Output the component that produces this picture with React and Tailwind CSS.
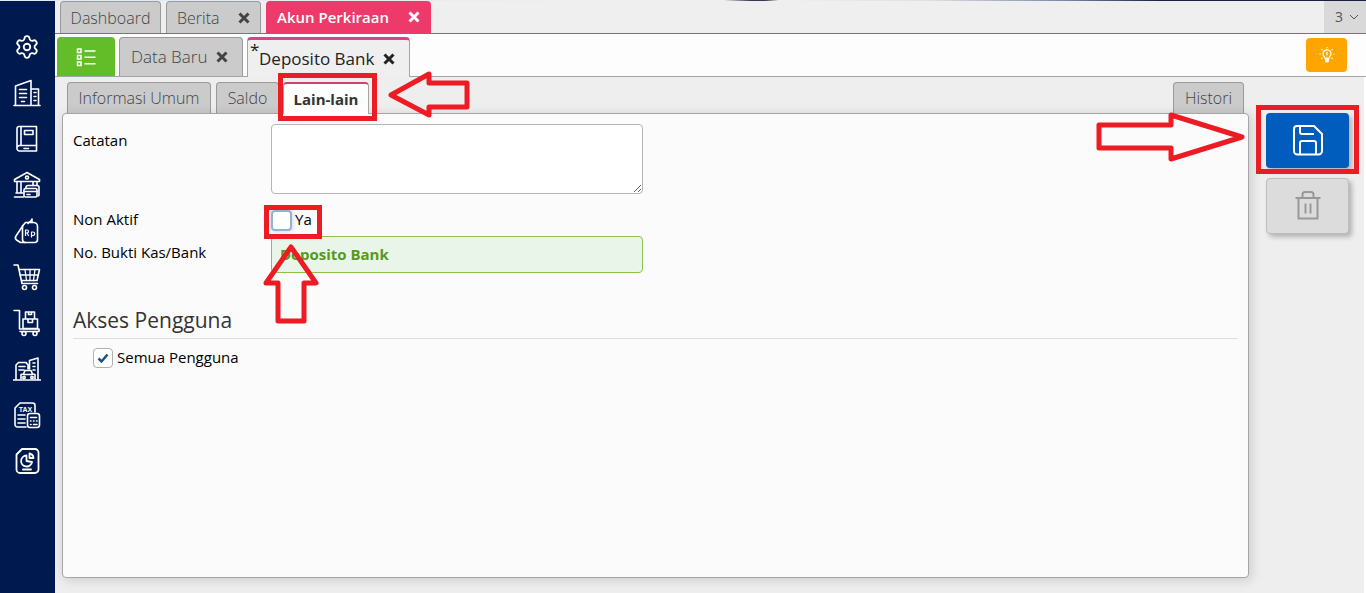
// src/App.jsx
import React, { useState } from "react";
import { Settings } from "lucide-react";

/* ---------- icons ---------- */

function Glyph({ children, size = 28, stroke = 1.6 }) {
  return (
    <svg
      width={size}
      height={size}
      viewBox="0 0 28 28"
      fill="none"
      stroke="currentColor"
      strokeWidth={stroke}
      strokeLinecap="round"
      strokeLinejoin="round"
      aria-hidden="true"
    >
      {children}
    </svg>
  );
}

const CompanyIcon = () => (
  <Glyph>
    <path d="M1 26.5h26M2.500 26.500V7L18 1.500v25M18 10h7.500v16.500" />
    <path d="M6.500 10.500h7M6.500 14.500h7M6.500 18.500h7M8.500 22.500h3M21 13.500h2M21 17.500h2M21 21.500h2" />
  </Glyph>
);

const LedgerIcon = () => (
  <Glyph>
    <path d="M6 1.500h17.500v24.500H6.500a2.500 2.500 0 0 1-2.500-2.500V3.500a2 2 0 0 1 2-2Z" />
    <path d="M8 1.500v19M4.500 21.500c.5-.7 1-1 2-1h17M11.500 5.500h8.500v4h-8.500zM11 23.500h4.500" />
  </Glyph>
);

const BankIcon = () => (
  <Glyph>
    <path d="M1.500 8.500 14 1.500l12.500 7v2h-25zM4 10.500v11M8 10.500v11M20 10.500v4M24 10.500v4M3 22h7M1.500 26h9" />
    <circle cx="14" cy="6.500" r="1.500" />
    <path d="M13 17.500v-1a2 2 0 0 1 2-2h9a2 2 0 0 1 2 2V24a1 1 0 0 1-1 1" />
    <rect x="11" y="17.500" width="13" height="8.500" rx="1.500" />
    <path d="M11 20.500h13M14 23.500h3" />
  </Glyph>
);

const SalesTagIcon = () => (
  <Glyph>
    <path d="M12.500 5.500h8a4 4 0 0 1 4 4v13a3 3 0 0 1-3 3h-9a3 3 0 0 1-3-3V9z" />
    <path d="m10 8.500-7 10.500a3 3 0 0 0 .5 4l4 2.500h5M15 6.500c1-2.500 2.500-.5 4-4.500v3.500" />
    <path d="M12.500 18.500v-5.500h1.500a1.300 1.300 0 0 1 0 3h-1.500m1.500 0 1.500 2.500M18.500 20v-5h1.500a1.500 1.500 0 0 1 0 3.500h-1.500" strokeWidth="1.200" />
  </Glyph>
);

const CartIcon = () => (
  <Glyph>
    <path d="M1 2h4l4 18.500M6 6.500h20.500L24 17.500H8.500M9 20.500h15.500" />
    <path d="M7 12h18.500M12 6.500l1.500 11M17 6.500v11M22 6.500l-1.500 11" strokeWidth="1.300" />
    <circle cx="11.500" cy="24.500" r="2" />
    <circle cx="21.500" cy="24.500" r="2" />
  </Glyph>
);

const TrolleyIcon = () => (
  <Glyph>
    <path d="M1 1.500h5.500V20H26v2.500H7" />
    <path d="M10 10h14.500v9.500H10zM12.500 3h9v7h-9zM15.500 3v2.500h3V3M15 10v3.500h4.500V10" />
    <circle cx="11" cy="24.500" r="2" />
    <circle cx="22" cy="24.500" r="2" />
  </Glyph>
);

const AssetIcon = () => (
  <Glyph>
    <path d="M.5 25h27M3 25V10l2.500-2.500H13l2 2.500v4M16.500 14V5.500L25 3v22" />
    <path d="M6 11.500h6M6 15h5M20 8h2M20 11.500h2M20 15h2" />
    <path d="M8 24v-4.500l2.500-.5 1.500-3.500h6l1.500 3.500 2.500.5V24M11 19.500h8" />
    <circle cx="11" cy="22.500" r="1.200" />
    <circle cx="19" cy="22.500" r="1.200" />
  </Glyph>
);

const TaxIcon = () => (
  <Glyph>
    <path d="M13 26H4.500a2.500 2.500 0 0 1-2.500-2.500V7l5-5h12.500A2.500 2.500 0 0 1 22 4.500V11" />
    <path d="M5 14h7M5 18h7M5 22h7" />
    <rect x="14.500" y="12.500" width="12" height="14" rx="2.500" />
    <path d="M17.500 16.500h6M17.500 20h.5M20.500 20h.5M23.500 20h.5M17.500 23.500h.5M20.500 23.500h3.500" />
    <text
      x="12.500"
      y="10.500"
      textAnchor="middle"
      fontSize="7"
      fontWeight="700"
      fontFamily="Liberation Sans, sans-serif"
      fill="currentColor"
      stroke="none"
    >
      TAX
    </text>
  </Glyph>
);

const ReportIcon = () => (
  <Glyph stroke={1.8}>
    <path d="M9 2h13a3.500 3.500 0 0 1 3.500 3.500v17A3.500 3.500 0 0 1 22 26H7a3.500 3.500 0 0 1-3.500-3.500v-15z" />
    <path d="M13.500 8.500a5.500 5.500 0 1 0 5.500 6.500l-5.500-1zM16.500 11V6.500a5 5 0 0 1 4 4.500zM10 22.500h8" />
  </Glyph>
);

const ListIcon = () => (
  <svg width="20" height="20" viewBox="0 0 20 20" fill="none" stroke="currentColor" strokeWidth="1.500" aria-hidden="true">
    <path d="M1.500 2h3.500v3.500H1.500zM1.500 8.500h3.500V12H1.500zM1.500 15h3.500v3.500H1.500zM8.500 4h11M8.500 10.300h11M8.500 16.700h11" />
  </svg>
);

const CrossIcon = () => (
  <svg width="12" height="12" viewBox="0 0 12 12" stroke="currentColor" strokeWidth="3" aria-hidden="true">
    <path d="m1.500 1.500 9 9M10.500 1.500l-9 9" />
  </svg>
);

const BulbIcon = () => (
  <svg width="16" height="16" viewBox="0 0 16 16" fill="none" stroke="currentColor" strokeWidth="1.200" strokeLinecap="round" aria-hidden="true">
    <path d="M6.300 11.500c0-1.500-2.300-2.200-2.300-4.700a4 4 0 0 1 8 0c0 2.500-2.300 3.200-2.300 4.700z" />
    <path d="M6.500 12.500h3l-.5 2.500h-2z" fill="currentColor" />
    <path d="M8 8V5M8 10v.2M8 .5v.3M2.800 2.500l.3.300M13.200 2.500l-.3.300M.8 7h.5M14.700 7h.5M2.800 11.500l.3-.3M13.200 11.500l-.3-.3" />
  </svg>
);

const DiskIcon = () => (
  <svg width="32" height="32" viewBox="0 0 32 32" fill="none" stroke="currentColor" strokeWidth="2" strokeLinejoin="round" aria-hidden="true">
    <path d="M5 1h17l8 8v17a3.500 3.500 0 0 1-3.500 3.500h-21A3.500 3.500 0 0 1 2 26V4a3 3 0 0 1 3-3Z" />
    <path d="M8 1v6a2 2 0 0 0 2 2h12M8 29V18a2 2 0 0 1 2-2h12a2 2 0 0 1 2 2v11" />
  </svg>
);

const BinIcon = () => (
  <svg width="28" height="32" viewBox="0 0 28 32" fill="none" stroke="currentColor" strokeWidth="2" aria-hidden="true">
    <path d="M1.500 8h25M4.500 8v20.500h19V8M8.500 8V4.500A2.500 2.500 0 0 1 11 2h6a2.500 2.500 0 0 1 2.500 2.500V8" />
    <path d="M11.500 13.500v10M16.500 13.500v10" />
  </svg>
);

/* ---------- data ---------- */

const MENU = [
  { label: "Pengaturan", icon: () => <Settings size={26} strokeWidth={1.700} /> },
  { label: "Perusahaan", icon: CompanyIcon },
  { label: "Buku Besar", icon: LedgerIcon },
  { label: "Kas & Bank", icon: BankIcon },
  { label: "Penjualan", icon: SalesTagIcon },
  { label: "Pembelian", icon: CartIcon },
  { label: "Persediaan", icon: TrolleyIcon },
  { label: "Aset Tetap", icon: AssetIcon },
  { label: "Pajak", icon: TaxIcon },
  { label: "Laporan", icon: ReportIcon },
];

/* ---------- red guide marks ---------- */

function Arrow({ className, width, height, points }) {
  return (
    <svg
      className={`pointer-events-none absolute z-20 ${className}`}
      width={width}
      height={height}
      fill="none"
      stroke="#ed1c24"
      strokeWidth="5"
      strokeLinejoin="round"
      aria-hidden="true"
    >
      <polygon points={points} />
    </svg>
  );
}

const Frame = ({ className }) => (
  <span className={`pointer-events-none absolute z-10 border-[5px] border-[#ed1c24] ${className}`} />
);

/* ---------- page ---------- */

const grayTab = "rounded-t border border-b-0 border-[#9a9a9a] bg-[#cbcbcb] text-[#444]";

function Sidebar() {
  return (
    <nav className="flex w-[55px] shrink-0 flex-col bg-[#001a50] pt-[23px] pr-0.5 text-white">
      {MENU.map(({ label, icon: Icon }) => (
        <button key={label} aria-label={label} className="flex h-[46px] items-center justify-center">
          <Icon />
        </button>
      ))}
    </nav>
  );
}

function ModuleTabs() {
  return (
    <div className="flex h-[33px] items-stretch gap-[5px] border-b border-b-[#e0407a] bg-[#efefef] pl-[5px] text-base">
      <button className={`w-[101px] font-light ${grayTab}`}>Dashboard</button>
      <div className={`flex w-[95px] items-center justify-between px-2.5 ${grayTab}`}>
        <button className="font-light">Berita</button>
        <button aria-label="Tutup Berita"><CrossIcon /></button>
      </div>
      <div className="flex w-[165px] items-center justify-between rounded-t bg-[#ee3a6a] px-[11px] text-[15px] font-semibold text-white">
        <button>Akun Perkiraan</button>
        <button aria-label="Tutup Akun Perkiraan"><CrossIcon /></button>
      </div>
      <button className="ml-auto flex w-[42px] items-center justify-center gap-1.5 bg-[#d9d9d9] pl-1 text-sm text-[#555]">
        3
        <svg width="10" height="6" viewBox="0 0 10 6" fill="none" stroke="currentColor" aria-hidden="true">
          <path d="m1 1 4 4 4-4" />
        </svg>
      </button>
    </div>
  );
}

function RecordTabs() {
  return (
    <div className="flex h-[43px] items-end gap-1 border-b border-[#a5a5a5] bg-[#fdfdfd] pl-0.5 text-[17px]">
      <button aria-label="Daftar" className="flex h-[39px] w-[58px] items-center justify-center rounded-t bg-[#62bd29] text-white">
        <ListIcon />
      </button>
      <div className={`flex h-[39px] w-[124px] items-center justify-between pr-3.5 pl-[11px] ${grayTab}`}>
        <button className="font-light">Data Baru</button>
        <button aria-label="Tutup Data Baru"><CrossIcon /></button>
      </div>
      <div className="relative z-10 -mb-px flex h-10 w-[163px] items-center justify-between rounded-t border border-t-[3px] border-b-0 border-[#a5a5a5] border-t-[#d5448c] bg-[#efefef] pr-3.5 pl-[11px] text-[#222]">
        <span className="absolute top-0 left-0.5 leading-5">*</span>
        <button>Deposito Bank</button>
        <button aria-label="Tutup Deposito Bank"><CrossIcon /></button>
      </div>
      <button aria-label="Tips" className="mr-[19px] mb-1 ml-auto flex h-[34px] w-[41px] items-center justify-center rounded bg-[#ffa500] text-white">
        <BulbIcon />
      </button>
    </div>
  );
}

function SectionTabs() {
  return (
    <div className="flex h-[31px] items-stretch gap-[5px] px-[5px] text-base">
      <button className={`w-[144px] font-light ${grayTab}`}>Informasi Umum</button>
      <button className={`w-[63px] font-light ${grayTab}`}>Saldo</button>
      <div className="relative z-20 -mb-px -ml-px flex">
        <button className="w-[86px] rounded-t border border-t-2 border-b-0 border-[#a5a5a5] border-t-[#c4456f] bg-[#fdfdfd] text-[15px] font-bold text-[#333]">
          Lain-lain
        </button>
        <Frame className="-top-[9px] -right-2 -bottom-[7px] -left-[5px]" />
        <Arrow
          className="top-[-12px] left-[104px]"
          width={84}
          height={50}
          points="4,25 42,4 42,13 80,13 80,37 42,37 42,45"
        />
      </div>
      <button className={`ml-auto w-[71px] font-light ${grayTab}`}>Histori</button>
    </div>
  );
}

function DetailForm() {
  const [note, setNote] = useState("");
  const [inactive, setInactive] = useState(false);
  const [allUsers, setAllUsers] = useState(true);

  return (
    <form className="flex-1 rounded border border-[#a5a5a5] bg-[#fbfbfb] p-2.5 text-[15px] text-black shadow-[2px_2px_12px_rgba(0,0,0,0.15)]">
      <div className="grid grid-cols-[198px_minmax(0,372px)]">
        <label htmlFor="note" className="pt-1.5 leading-5">Catatan</label>
        <textarea
          id="note"
          value={note}
          onChange={(e) => setNote(e.target.value)}
          className="block h-[70px] w-full rounded border border-[#b5b5b5] bg-white p-2"
        />

        <label htmlFor="inactive" className="mt-2.5 pt-[5px] leading-5">Non Aktif</label>
        <div className="relative mt-2.5 flex h-8 items-center">
          <input
            id="inactive"
            type="checkbox"
            checked={inactive}
            onChange={(e) => setInactive(e.target.checked)}
            className="size-[21px] appearance-none rounded border-2 border-[#92b4d0] bg-white shadow-[0_0_5px_rgba(120,170,220,0.5)]"
          />
          <label htmlFor="inactive" className="pb-0.5 pl-[3px] leading-5">Ya</label>
          <Frame className="top-px -left-[7px] h-[34px] w-[58px]" />
          <Arrow
            className="top-[39px] -left-[10px]"
            width={60}
            height={84}
            points="30,4 55,40 43,40 43,78 17,78 17,40 5,40"
          />
        </div>

        <label htmlFor="voucher" className="pt-1.5 leading-5">No. Bukti Kas/Bank</label>
        <input
          id="voucher"
          readOnly
          value="Deposito Bank"
          className="h-[37px] w-full rounded border border-[#8bc34a] bg-[#e9f5e9] px-2 pb-0.5 font-bold text-[#569a1c]"
        />
      </div>

      <h2 className="mt-[33px] border-b border-[#dedede] pb-1 text-[21px] leading-7 text-[#333]">Akses Pengguna</h2>
      <div className="mt-1.5 flex items-center pt-0.5 pl-5">
        <span className="relative flex">
          <input
            id="all-users"
            type="checkbox"
            checked={allUsers}
            onChange={(e) => setAllUsers(e.target.checked)}
            className="size-5 appearance-none rounded border border-[#b0b0b0] bg-white"
          />
          {allUsers && (
            <svg className="pointer-events-none absolute inset-0" width="20" height="20" fill="none" stroke="#1f4f7d" strokeWidth="2.500" aria-hidden="true">
              <path d="m5.500 10.500 3 3 6-7" />
            </svg>
          )}
        </span>
        <label htmlFor="all-users" className="pb-0.5 pl-1 leading-5">Semua Pengguna</label>
      </div>
    </form>
  );
}

function Actions() {
  return (
    <div className="flex w-[83px] shrink-0 flex-col gap-2.5 pt-[31px]">
      <div className="relative">
        <button aria-label="Simpan" className="flex h-[55px] w-full items-center justify-center rounded bg-[#005dbe] text-white shadow-[3px_3px_5px_rgba(0,0,0,0.25)]">
          <DiskIcon />
        </button>
        <Frame className="-top-2 -right-[10px] -bottom-[6px] -left-[10px]" />
        <Arrow
          className="-top-[3px] -left-[171px]"
          width={152}
          height={54}
          points="4,15 76,15 76,5 147,27 76,49 76,38 4,38"
        />
      </div>
      <button aria-label="Hapus" className="flex h-14 w-full items-center justify-center rounded border border-[#bdbdbd] bg-[#dcdcdc] text-[#999] shadow-[3px_3px_5px_rgba(0,0,0,0.25)]">
        <BinIcon />
      </button>
    </div>
  );
}

export default function App() {
  return (
    <div className="flex min-h-screen flex-col bg-[#eeeeee] font-['Open_Sans','Noto_Sans',sans-serif]">
      <div className="h-px bg-[linear-gradient(90deg,#dfe9f2_0%,#efefef_53%,#3a3550_55%,#3a3550_56%,#efefef_57%,#e0e0e0_68%,#7c87a5_78%,#1c1f42_85%)]" />
      <div className="flex flex-1">
        <Sidebar />
        <main className="flex min-w-0 flex-1 flex-col">
          <ModuleTabs />
          <RecordTabs />
          <div className="flex flex-1 gap-[17px] border-r-2 border-white pt-[5px] pr-[15px] pb-[15px] pl-[7px]">
            <div className="flex min-w-0 flex-1 flex-col">
              <SectionTabs />
              <DetailForm />
            </div>
            <Actions />
          </div>
        </main>
      </div>
    </div>
  );
}
